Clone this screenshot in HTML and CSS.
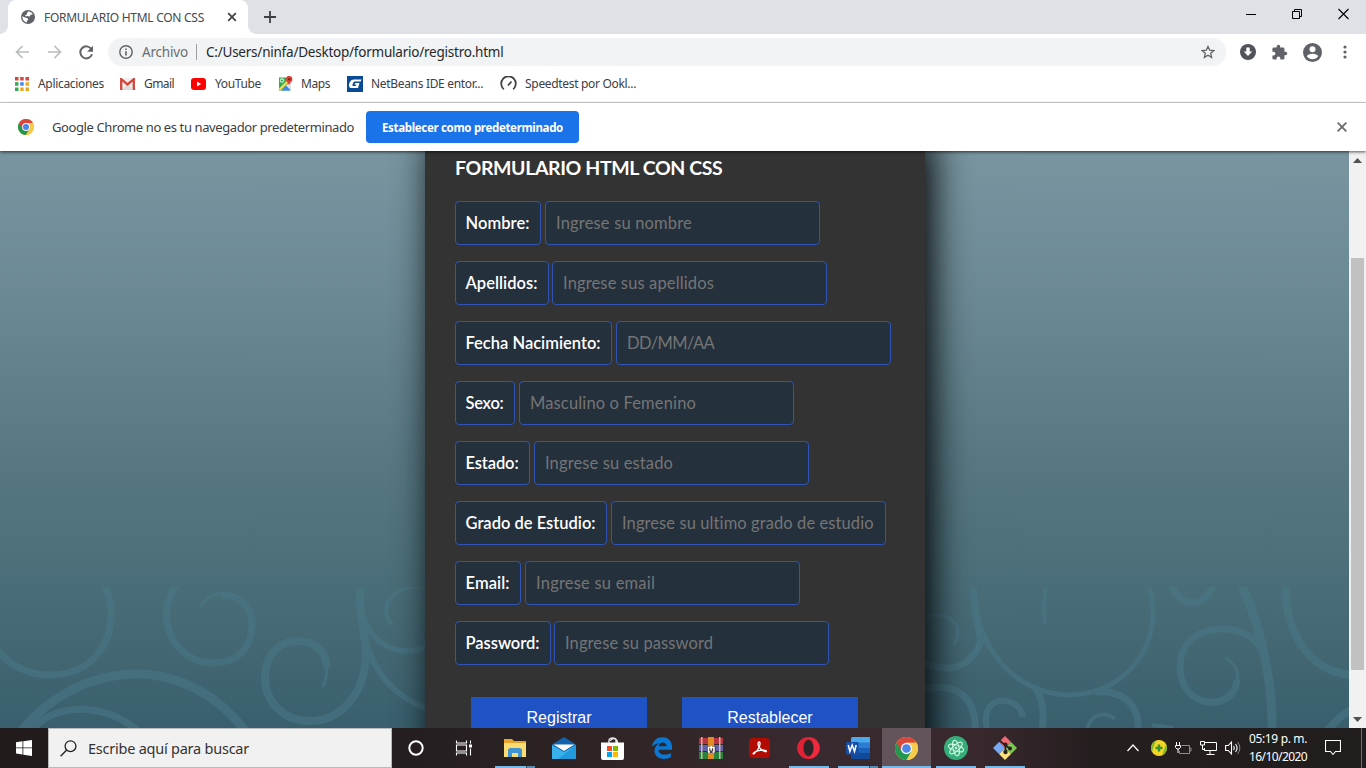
FILE: index.html
```html
<!DOCTYPE html>
<html lang="es">
<head>
<meta charset="utf-8">
<title>FORMULARIO HTML CON CSS</title>
<link rel="stylesheet" href="styles.css">
</head>
<body>
<div class="screen">
  <header class="tabstrip">
    <div class="tab">
      <svg class="globe" width="14" height="14" viewBox="0 0 14 14"><circle cx="7" cy="7" r="7" fill="#5f6368"/><path d="M1.300 6.200 4 7.600l2.600.6.600 1.600-1.400 1.100.2 1.500C3.300 12 1.200 9.500 1.300 6.200ZM7 1.500c2-.2 3.800.9 4.800 2.700L9.500 5 8.600 6.400 6.400 6 5 6.600 4 5.200l1.800-.7L6 3.200z" fill="#fff"/></svg>
      <span class="tab-title" data-w="160">FORMULARIO HTML CON CSS</span>
      <svg width="10" height="10" viewBox="0 0 10 10"><path d="m1.200 1.200 7.600 7.600m0-7.600L1.200 8.800" stroke="#3c4043" stroke-width="1.700"/></svg>
    </div>
    <svg class="plus" width="12" height="12" viewBox="0 0 12 12"><path d="M6 0v12M0 6h12" stroke="#3c4043" stroke-width="1.800"/></svg>
    <div class="winctl">
      <svg width="10" height="12" viewBox="0 0 10 12"><path d="M0 6.500h10" stroke="#000"/></svg>
      <svg width="10" height="12" viewBox="0 0 10 12"><path d="M.5 3.500h7v7h-7zM2.500 3.500v-2h7v7h-2" fill="none" stroke="#000"/></svg>
      <svg width="11" height="12" viewBox="0 0 11 12"><path d="m.5 1 10 10m0-10-10 10" stroke="#000" stroke-width="1.100"/></svg>
    </div>
  </header>

  <div class="toolbar">
    <svg width="15" height="14" viewBox="0 0 15 14"><path d="M14 7H1.500m6-6-6 6 6 6" fill="none" stroke="#babcbe" stroke-width="1.700"/></svg>
    <svg width="15" height="14" viewBox="0 0 15 14"><path d="M1 7h12.500m-6-6 6 6-6 6" fill="none" stroke="#babcbe" stroke-width="1.700"/></svg>
    <svg width="15" height="15" viewBox="0 0 15 15"><path d="M12.300 4A6 6 0 1 0 13 9.300" fill="none" stroke="#5f6368" stroke-width="2"/><path d="M14 .8v5.900H8.100z" fill="#5f6368"/></svg>
    <div class="omnibox">
      <svg width="14" height="14" viewBox="0 0 14 14"><circle cx="7" cy="7" r="6.200" fill="none" stroke="#5f6368" stroke-width="1.400"/><path d="M7 6.200V10.500M7 3.500V5" stroke="#5f6368" stroke-width="1.600"/></svg>
      <span class="scheme" data-w="46">Archivo</span>
      <i class="sep"></i>
      <span class="url" data-w="297.5">C:/Users/ninfa/Desktop/formulario/registro.html</span>
      <svg class="star" width="14" height="14" viewBox="0 0 24 24"><path d="m12 2.500 2.900 6.400 7 .7-5.300 4.600 1.600 6.900L12 17.400l-6.200 3.700 1.600-6.900L2.100 9.600l7-.7z" fill="none" stroke="#5f6368" stroke-width="2.200"/></svg>
    </div>
    <div class="actions">
      <svg width="16" height="16" viewBox="0 0 16 16"><circle cx="8" cy="8" r="8" fill="#505357"/><path d="M6.300 3.500h3.400v4h2.600L8 12 3.700 7.500h2.600z" fill="#fff"/></svg>
      <svg width="17" height="17" viewBox="0 0 24 24"><path d="M20.500 11H19V7a2 2 0 0 0-2-2h-4V3.500a2.500 2.500 0 0 0-5 0V5H4a2 2 0 0 0-2 2v3.800h1.500a2.700 2.700 0 0 1 0 5.400H2V20a2 2 0 0 0 2 2h3.800v-1.500a2.700 2.700 0 0 1 5.400 0V22H17a2 2 0 0 0 2-2v-4h1.500a2.500 2.500 0 0 0 0-5z" fill="#5f6368"/></svg>
      <svg width="19" height="19" viewBox="0 0 19 19"><circle cx="9.500" cy="9.500" r="9.500" fill="#5f6368"/><circle cx="9.500" cy="6.300" r="3" fill="#fff"/><path d="M3.800 13.200c1-3.400 10.400-3.400 11.400 0-2.600 4-8.800 4-11.400 0z" fill="#fff"/></svg>
      <svg width="4" height="14" viewBox="0 0 4 14" fill="#5f6368"><circle cx="2" cy="2" r="1.600"/><circle cx="2" cy="7" r="1.600"/><circle cx="2" cy="12" r="1.600"/></svg>
    </div>
  </div>

  <nav class="bookmarks">
    <a class="bm bm-apps"><svg width="14" height="14" viewBox="0 0 14 14"><path d="M0 0h3.500v3.500H0zM5.200 0h3.500v3.500H5.200zM10.500 0H14v3.500h-3.500z" fill="#d8453a"/><path d="M0 5.200h3.500v3.500H0z" fill="#34a853"/><path d="M5.200 5.200h3.500v3.500H5.200z" fill="#4285f4"/><path d="M10.500 5.200H14v3.500h-3.500zM5.200 10.500h3.500V14H5.200zM10.500 10.500H14V14h-3.500z" fill="#e8aa24"/><path d="M0 10.500h3.500V14H0z" fill="#34a853"/></svg><span data-w="66">Aplicaciones</span></a>
    <a class="bm bm-gmail"><svg width="15" height="12" viewBox="0 0 15 12"><path d="M0 0h15v12H0z" fill="#eee"/><path d="m2 12 5.500-6.500L13 12z" fill="#ddd"/><path d="M1.200 12V1.200l6.300 5.300 6.300-5.300V12" fill="none" stroke="#d2453b" stroke-width="2.300"/></svg><span data-w="30">Gmail</span></a>
    <a class="bm bm-yt"><svg width="15" height="12" viewBox="0 0 15 12"><rect width="15" height="12" rx="3" fill="#f00"/><path d="m6 3.500 4.200 2.500L6 8.500z" fill="#fff"/></svg><span data-w="46">YouTube</span></a>
    <a class="bm bm-maps"><svg width="15" height="15" viewBox="0 0 15 15"><path d="M1 1.500h11v13H1z" fill="#34a853"/><path d="m3 14.500 5-5 5 5z" fill="#4285f4"/><path d="m.5 13 11-11 1.500 2L2.500 14.500z" fill="#ffd54f"/><path d="m8 9.500 5-3.500v8.500z" fill="#dfe3e8"/><circle cx="4" cy="4.500" r="1.700" fill="none" stroke="#fff"/><path d="M11 9.500C10.500 6.500 8 6 8 3.200a3.200 3.200 0 0 1 6.500 0C14.500 6 11.500 6.500 11 9.500z" fill="#dc4437"/><circle cx="11.200" cy="3.200" r="1.200" fill="#7e2018"/></svg><span data-w="29">Maps</span></a>
    <a class="bm bm-nb"><svg width="16" height="16" viewBox="0 0 16 16"><path d="M0 0h16v16H0z" fill="#0b4a94"/><path d="M14.500 3.500H7C3.500 3.500 2 7 2 9.500c0 2 1 2.500 3 2.500h6l1.500-5H8l-.5 1.500h1.700l-.5 1.500H5.800C5 10 6 5.500 7.500 5.500h6.200z" fill="#fff"/></svg><span data-w="112">NetBeans IDE entor...</span></a>
    <a class="bm bm-speed"><svg width="17" height="15" viewBox="0 0 17 15"><path d="M3.800 13.200A7.300 7.300 0 1 1 13.200 13.200M8 9.500l3.500-4" fill="none" stroke="#3f4246" stroke-width="1.800"/></svg><span data-w="111">Speedtest por Ookl...</span></a>
  </nav>

  <div class="infobar">
    <svg width="16" height="16" viewBox="0 0 48 48"><use href="#chrome"/></svg>
    <span class="info-text" data-w="302">Google Chrome no es tu navegador predeterminado</span>
    <button class="default-btn"><span data-w="181">Establecer como predeterminado</span></button>
    <svg class="info-close" width="10" height="10" viewBox="0 0 10 10"><path d="m.7.7 8.600 8.600m0-8.600L.7 9.300" stroke="#6b6e72" stroke-width="1.900"/></svg>
  </div>

  <main class="viewport">
    <div class="page">
      <svg class="swirls" width="1349" height="577" viewBox="0 151 1349 577">
        <defs><clipPath id="tile"><path d="M0 587h1349v141H0z"/></clipPath></defs>
        <g clip-path="url(#tile)" opacity=".55" fill="none" stroke="#4b7888" stroke-width="7">
          <path d="M103 583C123 617 107 675 50 675 24 675 8 663-4 649"/>
          <path d="M177 583C151 622 177 663 213 663 240 663 252 645 252 625 252 606 239 595 222 595"/>
          <path d="M225 594Q208 592 200 608" stroke-width="3"/>
          <path d="M361 583C357 625 369 636 365 665 361 698 338 721 310 721 282 721 265 701 265 677 265 655 280 641 297 641 316 641 326 651 327 668" stroke-width="8"/>
          <path d="M327 664Q327 677 323 687" stroke-width="3"/>
          <path d="M360 600C362 644 402 662 430 644M365 640Q380 692 428 709" stroke-width="6"/>
          <path d="M430 587C405 584 386 594 386 611Q387 621 393 624" stroke-width="4"/>
          <path d="M20 732C85 655 187 654 246 732" stroke-width="9"/>
          <path d="M30 732C53 702 104 702 137 730"/>
          <path d="M973 583C973 645 1014 695 1070 695 1124 695 1168 644 1148 583" stroke-width="5"/>
          <path d="M973 583Q974 613 981 641 970 669 945 668 930 667 922 660" stroke-width="7"/>
          <path d="M922 618C948 609 965 623 954 645" stroke-width="4"/>
          <path d="M1046 583Q1043 604 1045 624" stroke-width="4"/>
          <path d="M1170 583C1180 609 1206 609 1214 583"/>
          <path d="M1241 583C1264 633 1273 691 1272 731" stroke-width="9"/>
          <path d="M1260 648C1248 621 1180 619 1180 667 1180 710 1234 713 1237 680" stroke-width="7"/>
          <path d="M1237 683Q1240 667 1226 658" stroke-width="3"/>
          <path d="M1286 583C1284 632 1309 671 1351 675" stroke-width="8"/>
          <path d="M918 691C955 679 977 697 975 732M1036 688Q1046 705 1042 732M1095 692C1128 690 1140 709 1138 732"/>
          <path d="M988 732C976 694 1018 692 1023 717" stroke-width="6"/>
          <path d="M1087 732C1089 713 1105 711 1115 719M1152 725l22 3" stroke-width="4"/>
          <path d="M1351 710Q1337 717 1327 732" stroke-width="8"/>
        </g>
      </svg>
      <form class="form">
        <h1 class="heading"><span data-w="268">FORMULARIO HTML CON CSS</span></h1>
        <div class="row"><label data-w="64">Nombre:</label><input data-w="136" placeholder="Ingrese su nombre"></div>
        <div class="row tight"><label data-w="72">Apellidos:</label><input data-w="151" placeholder="Ingrese sus apellidos"></div>
        <div class="row"><label data-w="135">Fecha Nacimiento:</label><input data-w="87" placeholder="DD/MM/AA"></div>
        <div class="row"><label data-w="38">Sexo:</label><input data-w="166" placeholder="Masculino o Femenino"></div>
        <div class="row"><label data-w="53">Estado:</label><input data-w="128" placeholder="Ingrese su estado"></div>
        <div class="row"><label data-w="130">Grado de Estudio:</label><input data-w="252" placeholder="Ingrese su ultimo grado de estudio"></div>
        <div class="row"><label data-w="44">Email:</label><input data-w="119" placeholder="Ingrese su email"></div>
        <div class="row tight"><label data-w="74">Password:</label><input data-w="148" placeholder="Ingrese su password"></div>
        <div class="buttons"><button type="button">Registrar</button><button type="button">Restablecer</button></div>
      </form>
    </div>
    <div class="scrollbar">
      <svg width="9" height="5" viewBox="0 0 9 5"><path d="M0 5 4.500 0 9 5z" fill="#505050"/></svg>
      <i class="thumb"></i>
      <svg width="9" height="5" viewBox="0 0 9 5"><path d="m0 0 4.500 5L9 0z" fill="#505050"/></svg>
    </div>
  </main>

  <footer class="taskbar">
    <div class="start"><svg width="16" height="16" viewBox="0 0 16 16"><path d="M0 2.200 6.500 1.300v6.200H0zM7.300 1.200 16 0v7.500H7.300zM0 8.300h6.500v6.200L0 13.600zM7.300 8.300H16V16l-8.700-1.200z" fill="#fff"/></svg></div>
    <div class="search"><svg width="17" height="17" viewBox="0 0 17 17"><circle cx="10.500" cy="6.200" r="5.400" fill="none" stroke="#222" stroke-width="1.300"/><path d="M6.700 10 .6 16.300" stroke="#222" stroke-width="1.400"/></svg><span data-w="161">Escribe aquí para buscar</span></div>
    <div class="task"><svg width="16" height="16" viewBox="0 0 16 16"><circle cx="8" cy="8" r="6.700" fill="none" stroke="#fff" stroke-width="2"/></svg></div>
    <div class="task"><svg width="18" height="16" viewBox="0 0 18 16"><path d="M1.500.5v2.500h10V.5M1.500 15.500v-2.500h10v2.500M1.500 5h10v6h-10zM15.500.5v3M15.500 8.500v7" fill="none" stroke="#fff" stroke-width="1.100"/><path d="M14 4.500h3v3h-3z" fill="#fff"/></svg></div>
    <div class="task stack shift"><svg width="22" height="20" viewBox="0 0 22 20"><path d="M0 1h8l2 2h12v4H0z" fill="#e7a529"/><path d="M0 5h22v14H0z" fill="#f9dc74"/><path d="M4 19v-7.500L6 10h10l2 1.500V19h-4v-4H8v4z" fill="#3f94d1"/></svg></div>
    <div class="task"><svg width="24" height="22" viewBox="0 0 24 22"><path d="M0 7.500 12 0l12 7.500V22H0z" fill="#1464ad"/><path d="M1.500 7.500h21L12 14z" fill="#fff"/><path d="m0 8 12 7 12-7v14H0z" fill="#37b2ec"/><path d="M24 8 6 22h18z" fill="#188fd6" opacity=".7"/></svg></div>
    <div class="task"><svg width="23" height="23" viewBox="0 0 23 23"><path d="M8 8V3.500c0-3.500 7-3.500 7 0V8M9.500 4C10 .5 17 .5 16.500 7" fill="none" stroke="#e6e6e6" stroke-width="1.400"/><path d="M0 5.500h23V21a2 2 0 0 1-2 2H2a2 2 0 0 1-2-2z" fill="#fff"/><path d="M6 9h5v5H6z" fill="#f25022"/><path d="M12 9h5v5h-5z" fill="#7fba00"/><path d="M6 15h5v5H6z" fill="#00a4ef"/><path d="M12 15h5v5h-5z" fill="#ffb900"/></svg></div>
    <div class="task"><svg width="20" height="22" viewBox="0 0 20 22"><path d="M0 9.800C1 3.500 5 .3 10.500.3 17 .3 20 5 20 10v2.700H6.500c0 5.500 7.500 6 12.300 3.200v4.300C11.500 24 2 21.300 2.500 13.500 2.800 9.500 5 7.300 8 6c-3.400.6-6.300 1.700-8 3.800zM6.700 9.200h7.800C14.500 4 7.500 4.500 6.700 9.200z" fill="#0878d4"/></svg></div>
    <div class="task"><svg width="24" height="22" viewBox="0 0 24 22"><path d="M0 1h24v6H0z" fill="#b93340"/><path d="M0 8h24v6H0z" fill="#6261ab"/><path d="M0 15h24v7H0z" fill="#29823c"/><path d="M2 0h1.500v22H2zM20 0h1.500v22H20z" fill="#d7b5a4"/><path d="M9 0h6v22H9z" fill="#e18b24"/><path d="M8 9.500h9V16H8z" fill="#4b4341"/><path d="M9.500 15V10.500h5.500V15M12.200 9v4.500M9 15h2M13.500 15h2" fill="none" stroke="#fff" stroke-width="1.500"/></svg></div>
    <div class="task"><svg width="21" height="20" viewBox="0 0 21 20"><rect width="21" height="20" rx="4" fill="#b20b04"/><path d="M10 4c2.500 0 .5 7-4.600 11.500-2.400 1.500-1.300-1.500 3.300-2.700 4.500-1.300 9.300-.6 8.600.7-.8 1.300-8.800-3.200-8.200-8.100.1-.8.4-1.400.9-1.400z" fill="none" stroke="#fff" stroke-width="1.300"/></svg></div>
    <div class="task run"><svg width="23" height="22" viewBox="0 0 23 22"><ellipse cx="11.500" cy="11" rx="11.300" ry="11" fill="#ee2a3c"/><path d="M11.500 0a11 11 0 0 0-2 21.800L14 20 16 3z" fill="#bd1028" opacity=".3"/><ellipse cx="11.500" cy="11" rx="5.100" ry="8.200" fill="#2f2427"/></svg></div>
    <div class="task stack run"><svg width="24" height="22" viewBox="0 0 24 22"><path d="M5 1.500A1.500 1.500 0 0 1 6.500 0H24v6H5z" fill="#4aa8ec"/><path d="M5 5.500h19v5.500H5z" fill="#2b7cd3"/><path d="M5 11h19v5.500H5z" fill="#1a60b9"/><path d="M5 16.500h19V22H6.500A1.500 1.500 0 0 1 5 20.500z" fill="#124a9b"/><rect y="5" width="12.500" height="12.500" rx="1" fill="#164fa7"/><path d="m2.300 8 1.600 6.500L6.200 8l2.300 6.500L10.200 8" fill="none" stroke="#fff" stroke-width="1.500"/></svg></div>
    <div class="task active"><svg width="23" height="23" viewBox="0 0 48 48"><g id="chrome"><circle cx="24" cy="24" r="24" fill="#f7cb4a"/><path d="M24 24 3.200 12A24 24 0 0 0 24 48L34.400 30z" fill="#22974f"/><path d="M3.200 12a24 24 0 0 1 41.600 0H24L13.600 30z" fill="#d9473c"/><path d="M44.800 12A24 24 0 0 1 24 48l10.400-18L24 12z" fill="#f7cb4a"/><circle cx="24" cy="24" r="11.800" fill="#f5f5f5"/><circle cx="24" cy="24" r="9" fill="#4b86e8"/></g></svg></div>
    <div class="task run"><svg width="24" height="24" viewBox="0 0 24 24"><circle cx="12" cy="12" r="12" fill="#35ad78"/><g fill="none" stroke="#d6f5e4" stroke-width="1"><ellipse cx="12" cy="12" rx="3" ry="8" transform="rotate(-12 12 12)"/><ellipse cx="12" cy="12" rx="3" ry="8" transform="rotate(48 12 12)"/><ellipse cx="12" cy="12" rx="3" ry="8" transform="rotate(108 12 12)"/></g><circle cx="12" cy="12" r="1.200" fill="#e8fff2"/></svg></div>
    <div class="task run"><svg width="24" height="24" viewBox="0 0 24 24"><path d="m12 0 6 6-6 6-6-6z" fill="#ef6b73"/><path d="m18 6 6 6-6 6-6-6z" fill="#7cc653"/><path d="m12 12 6 6-6 6-6-6z" fill="#fbe27c"/><path d="m6 6 6 6-6 6-6-6z" fill="#78a9f5"/><path d="m6.500 4.500 6 5V17M12.500 9.500l4.500 3" fill="none" stroke="#29201f" stroke-width="1.700"/><circle cx="12.500" cy="8.500" r="2" fill="#29201f"/><circle cx="12.500" cy="16" r="2.200" fill="#29201f"/><circle cx="17" cy="12.500" r="2" fill="#29201f"/></svg></div>
    <div class="tray">
      <svg width="12" height="8" viewBox="0 0 12 8"><path d="m.5 7 5.500-6 5.500 6" fill="none" stroke="#fff" stroke-width="1.200"/></svg>
      <svg width="16" height="16" viewBox="0 0 16 16"><circle cx="8" cy="8" r="8" fill="#f6d625"/><path d="M1 12A8 8 0 0 1 5 1L2.500 7zM15 4a8 8 0 0 1-4 11l2.500-6z" fill="#77b72c"/><path d="M6.800 4.500h2.400v2.300h2.300v2.400H9.200v2.300H6.800V9.200H4.500V6.800h2.300z" fill="#35922f"/></svg>
      <svg width="17" height="13" viewBox="0 0 17 13"><path d="M6.500 3.500h8v8H4.500V9M14.500 6h1.500v3h-1.500" fill="none" stroke="#8f8b8b"/><path d="M1.500 0v3M4.500 0v3M.5 3.500h5v2l-1.500 1.500H2L.5 5.500zM3 7v4" fill="none" stroke="#fff"/></svg>
      <svg width="17" height="14" viewBox="0 0 17 14"><path d="M5 1.500h11.500v8H4.500V7M10 9.500V13M6.500 13.500h8M.5.500h4V4h-4zM2.500 4v4.500H5" fill="none" stroke="#fff"/></svg>
      <svg width="16" height="14" viewBox="0 0 16 14"><path d="M.6 4.500h2.700L6.500 1v12L3.300 9.500H.6zM8.500 5q1.500 2 0 4M10.500 3q3.200 4 0 8" fill="none" stroke="#fff" stroke-width="1.100"/><path d="M12.700 1q4.300 6 0 12" fill="none" stroke="#888"/></svg>
      <div class="clock"><span data-w="58">05:19 p. m.</span><span data-w="58">16/10/2020</span></div>
      <svg class="notif" width="16" height="16" viewBox="0 0 16 16"><path d="M.5.500h15v11h-5L8 14.500l-2.500-3h-5z" fill="none" stroke="#fff" stroke-width="1.100"/></svg>
      <i class="peek"></i>
    </div>
  </footer>
</div>
<script src="fit.js"></script>
</body>
</html>
```
FILE: styles.css
```css
* { box-sizing: border-box; }
body { margin: 0; font-family: "Noto Sans", "Open Sans", sans-serif; color: #3c4043; }
svg { display: block; flex: none; }
span, label { white-space: nowrap; }
.screen { width: 1366px; height: 768px; overflow: hidden; display: flex; flex-direction: column; background: #fff; }

.tabstrip { height: 34px; flex: none; background: #dee1e6; display: flex; align-items: center; padding-left: 8px; }
.tab { position: relative; width: 240px; height: 34px; background: #fff; border-radius: 8px 8px 0 0; display: flex; align-items: center; padding-left: 13px; }
.tab::before, .tab::after { content: ""; position: absolute; bottom: 0; width: 8px; height: 8px; }
.tab::before { left: -8px; background: radial-gradient(circle at 0 0, transparent 7.5px, #fff 8px); }
.tab::after { right: -8px; background: radial-gradient(circle at 100% 0, transparent 7.5px, #fff 8px); }
.tab-title { width: 160px; margin: 0 23px 0 9px; font-size: 12px; color: #45494d; }
.plus { margin-left: 16px; }
.winctl { margin: -6px 17px 0 auto; display: flex; gap: 36px; }

.toolbar { height: 36px; flex: none; display: flex; align-items: center; padding-left: 15px; gap: 17px; }
.omnibox { width: 1118px; height: 28px; margin-left: -3px; border-radius: 14px; background: #f1f3f4; display: flex; align-items: center; padding: 0 11px; font-size: 13.5px; }
.scheme { width: 46px; margin: 0 8px 0 9px; color: #6a6e72; }
.sep { width: 1px; height: 16px; background: #9aa0a6; margin-right: 9px; }
.url { color: #25282b; }
.star { margin-left: auto; }
.actions { display: flex; align-items: center; gap: 15px; margin-left: -3px; }
.actions svg:last-child { margin-left: 6px; }

.bookmarks { height: 33px; flex: none; border-bottom: 1px solid #d5d7da; display: flex; align-items: center; padding: 0 0 5px 15px; font-size: 12px; }
.bm { display: flex; align-items: center; gap: 9px; }
.bm-gmail { margin-left: 16px; }
.bm-yt, .bm-maps, .bm-nb, .bm-speed { margin-left: 17px; }
.bm-maps, .bm-nb, .bm-speed { gap: 8px; }

.infobar { position: relative; z-index: 2; height: 48px; flex: none; display: flex; align-items: center; padding: 0 19px 0 18px; background: #fff; box-shadow: 0 1px 3px rgba(0,0,0,.65); }
.info-text { margin: 0 12px 0 18px; font-size: 13px; }
.default-btn { width: 213px; height: 32px; padding: 0; border: 0; border-radius: 4px; background: #1a73e8; color: #fff; font: 700 11.500px "Noto Sans", sans-serif; }
.info-close { margin-left: auto; }

.viewport { height: 577px; flex: none; display: flex; overflow: hidden; }
.page { position: relative; width: 1349px; overflow: hidden; display: flex; justify-content: center; background: linear-gradient(#7895a0 0, #6b8994 25%, #587883 52%, #4a6e79 75%, #426672 88%, #395f6e 100%); }
.swirls { position: absolute; left: 0; top: 0; }
.form { position: relative; width: 500px; height: 700px; flex: none; margin: -26px 0 0 1px; padding: 30px; background: #333; box-shadow: 7px 13px 37px #000; border-radius: 4px; font-family: Lato, sans-serif; }
.heading { margin: 0 0 20px; height: 26px; line-height: 26px; color: #fff; font-size: 19.500px; font-weight: 700; }
.row { display: flex; gap: 4px; height: 44px; margin-bottom: 16px; }
.row.tight { gap: 3px; }
.row label, .row input { height: 44px; border: 1px solid #2f54b5; border-radius: 4px; background: #24303c; padding: 0 10px; font: 16.500px Lato, sans-serif; }
.row label { padding-left: 9.500px; padding-right: 10.500px; color: #fff; font-weight: 600; line-height: 43px; }
.row input { width: 275px; outline: 0; }
.row input::placeholder { color: #757575; opacity: 1; }
.buttons { display: flex; gap: 35px; padding: 16px 0 0 16px; }
.buttons button { width: 176px; height: 41px; border: 0; padding: 1px 0 0; background: #1f53c5; color: #fff; font: 16px "Liberation Sans", Arial, sans-serif; }

.scrollbar { width: 17px; background: #f1f1f1; display: flex; flex-direction: column; align-items: center; padding: 7px 0 6px; }
.thumb { width: 13px; height: 412px; background: #c1c1c1; margin: 95px 0 auto; }

.taskbar { height: 40px; flex: none; display: flex; background: linear-gradient(90deg, #211b1c 0, #241e20 30%, #322527 48%, #382a30 60%, #38282d 72%, #251e1f 80%, #211d1c 100%); }
.start { width: 48px; display: flex; align-items: center; justify-content: center; }
.search { width: 344px; background: #f1f1f1; border: 1px solid #b9b9b9; display: flex; align-items: center; padding-left: 11px; gap: 11px; font-size: 14.500px; color: #333; }
.task { position: relative; width: 49px; display: flex; align-items: center; justify-content: center; }
.search + .task, .search + .task + .task { width: 48px; }
.shift { margin-left: 2px; }
.run::after, .stack::after, .active::after { content: ""; position: absolute; bottom: 0; left: 5px; width: 40px; height: 2px; background: #76b9ed; }
.stack::after { background: linear-gradient(90deg, #76b9ed 31px, #315268 31px, #315268 32px, #578aaf 32px); }
.active { background: #62545a; }
.active::after { left: 0; width: 49px; }
.tray { margin-left: auto; display: flex; align-items: center; gap: 8px; color: #fff; }
.tray svg:first-child { margin-right: 4px; }
.clock { width: 58px; margin-left: 0; display: flex; flex-direction: column; align-items: center; font-size: 12px; line-height: 18px; }
.clock, .notif { position: relative; }
.notif { margin: 0 0 0 10px; }
.peek { width: 1px; height: 40px; background: #706c6c; margin: 0 4px 0 12px; }
```
FILE: fit.js
```js
// Spreads each text over its column width by adjusting letter spacing.
const pen = document.createElement('canvas').getContext('2d');
document.querySelectorAll('[data-w]').forEach(el => {
  const text = el.placeholder || el.textContent;
  const cs = getComputedStyle(el);
  pen.font = `${cs.fontWeight} ${cs.fontSize} ${cs.fontFamily}`;
  const extra = (Number(el.dataset.w) - pen.measureText(text).width) / text.length;
  el.style.letterSpacing = extra.toFixed(3) + 'px';
});
```
